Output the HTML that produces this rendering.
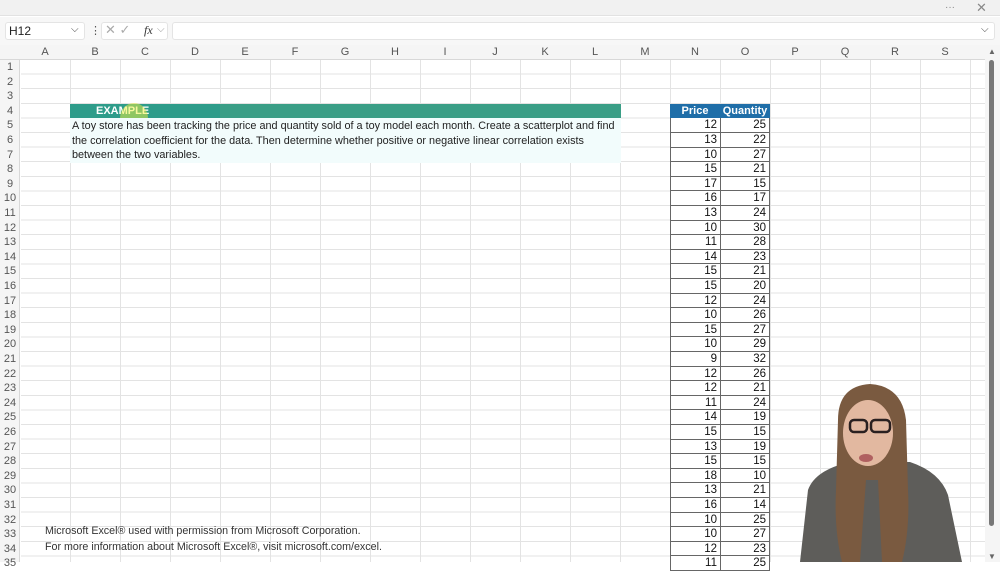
<!DOCTYPE html>
<html><head><meta charset="utf-8"><style>
*{margin:0;padding:0;box-sizing:border-box}
body{width:1000px;height:562px;overflow:hidden;background:#fff;font-family:"Liberation Sans",Arial,sans-serif;position:relative}
.a{position:absolute}
#top{left:0;top:0;width:1000px;height:16px;background:#f1f1f1;border-bottom:1px solid #e2e2e2}
#fb{left:0;top:17px;width:1000px;height:28px;background:#f7f7f7}
.box{background:#fff;border:1px solid #e4e4e4;border-radius:3px}
#colh{left:0;top:45px;width:985px;height:15px;background:#f5f5f5;border-bottom:1px solid #d8d8d8}
.ch{top:45px;width:50px;height:15px;font-size:11px;color:#555;text-align:center;line-height:15px}
#rowh{left:0;top:60px;width:20px;height:502px;background:#f5f5f5;border-right:1px solid #d8d8d8}
.rh{left:0;width:20px;font-size:11px;color:#555;text-align:center}
#grid{left:21px;top:60px;width:964px;height:502px;
background-image:repeating-linear-gradient(to right,transparent 0 48.9px,#e3e3e3 48.9px 50px),repeating-linear-gradient(to bottom,transparent 0 13.6px,#e3e3e3 13.6px 14.6px);background-position:0 0}
.t{font-size:11px;color:#222;white-space:nowrap}
.c{font-size:11.5px;color:#111;text-align:right;padding-right:3px;border:1px solid #666;border-top:none;background:#fff;line-height:15px;height:14.6px}
</style></head><body>
<div id="top" class="a"></div>
<div class="a" style="left:945px;top:2px;font-size:10px;color:#888">···</div>
<div class="a" style="left:976px;top:0px;font-size:13px;color:#888">✕</div>
<div id="fb" class="a"></div>
<div class="a box" style="left:5px;top:22px;width:80px;height:18px"></div>
<div class="a" style="left:9px;top:24px;font-size:12px;color:#222">H12</div>
<div class="a" style="left:71px;top:24px;font-size:10px;color:#444">⌵</div>
<div class="a" style="left:90px;top:24px;font-size:11px;color:#555">⋮</div>
<div class="a box" style="left:101px;top:22px;width:67px;height:18px"></div>
<div class="a" style="left:105px;top:22px;font-size:13px;color:#aaa">✕ ✓</div>
<div class="a" style="left:144px;top:23px;font-size:12px;font-style:italic;font-family:'Liberation Serif',serif;color:#333">fx</div>
<div class="a" style="left:157px;top:24px;font-size:10px;color:#999">⌵</div>
<div class="a box" style="left:172px;top:22px;width:823px;height:18px"></div>
<div class="a" style="left:981px;top:24px;font-size:10px;color:#444">⌵</div>
<div id="colh" class="a"></div>
<div id="rowh" class="a"></div>
<div id="grid" class="a"></div>
<div id="dyn"></div>
<div class="a" style="left:70px;top:104px;width:551px;height:14px;background:#3a9e86"></div>
<div class="a" style="left:70px;top:104px;width:150px;height:14px;background:#2e9c8a"></div>
<div class="a" style="left:96px;top:104px;font-size:11px;font-weight:bold;color:#fff;line-height:14px">EXAMPLE</div>
<div class="a" style="left:120px;top:103px;width:28px;height:30px;border-radius:50%;background:rgba(240,240,60,.5)"></div>
<div class="a" style="left:70px;top:118px;width:551px;height:45px;background:#f2fcfc"></div>
<div class="a t" style="left:72px;top:119px;line-height:14.6px;font-size:10.85px">A toy store has been tracking the price and quantity sold of a toy model each month. Create a scatterplot and find<br>the correlation coefficient for the data. Then determine whether positive or negative linear correlation exists<br>between the two variables.</div>
<div class="a t" style="left:45px;top:523px;font-size:10.7px;color:#333;line-height:16px">Microsoft Excel® used with permission from Microsoft Corporation.<br>For more information about Microsoft Excel®, visit microsoft.com/excel.</div>
<div class="a" style="left:670px;top:104px;width:100px;height:14px;background:#1f6ea8"></div>
<div class="a" style="left:670px;top:104px;width:50px;text-align:center;font-size:11px;font-weight:bold;color:#fff;line-height:14px">Price</div>
<div class="a" style="left:720px;top:104px;width:50px;text-align:center;font-size:11px;font-weight:bold;color:#fff;line-height:14px">Quantity</div>
<div class="a" style="left:985px;top:45px;width:15px;height:517px;background:#f5f5f5"></div>
<div class="a" style="left:988px;top:47px;font-size:8px;color:#666">▲</div>
<div class="a" style="left:988px;top:552px;font-size:8px;color:#666">▼</div>
<div class="a" style="left:989px;top:60px;width:5px;height:466px;border-radius:3px;background:#777"></div>
<svg class="a" style="left:790px;top:380px" width="180" height="182" viewBox="0 0 180 182">
<path d="M10 182 L18 110 Q25 90 60 82 L120 82 Q150 92 158 115 L172 182 Z" fill="#5e5d5a"/>
<path d="M48 40 Q48 6 80 4 Q112 6 116 40 L118 110 Q120 150 112 182 L92 182 L88 100 L76 100 L70 182 L52 182 Q44 150 46 110 Z" fill="#7a5a40"/>
<ellipse cx="78" cy="53" rx="25" ry="33" fill="#e2b8a0"/>
<rect x="60" y="40" width="17" height="12" rx="4" fill="none" stroke="#2a2020" stroke-width="2.5"/>
<rect x="81" y="40" width="19" height="12" rx="4" fill="none" stroke="#2a2020" stroke-width="2.5"/>
<ellipse cx="76" cy="78" rx="7" ry="4" fill="#b06060"/>
</svg>
<script>
var d=document.getElementById('dyn'),h='';
var cols='ABCDEFGHIJKLMNOPQRS';
for(var i=0;i<cols.length;i++)h+='<div class="a ch" style="left:'+(20+i*50)+'px">'+cols[i]+'</div>';
for(var r=1;r<=35;r++){var y=60+(r-1)*14.6;h+='<div class="a rh" style="top:'+y+'px;height:14.6px;line-height:14.6px">'+r+'</div>';}
var p=[12,13,10,15,17,16,13,10,11,14,15,15,12,10,15,10,9,12,12,11,14,15,13,15,18,13,16,10,10,12,11];
var q=[25,22,27,21,15,17,24,30,28,23,21,20,24,26,27,29,32,26,21,24,19,15,19,15,10,21,14,25,27,23,25];
for(var k=0;k<p.length;k++){var y=60+(4+k)*14.6;
h+='<div class="a c" style="left:670px;top:'+y+'px;width:51px">'+p[k]+'</div>';
h+='<div class="a c" style="left:720px;top:'+y+'px;width:50px">'+q[k]+'</div>';}
d.innerHTML=h;
</script>
</body></html>
